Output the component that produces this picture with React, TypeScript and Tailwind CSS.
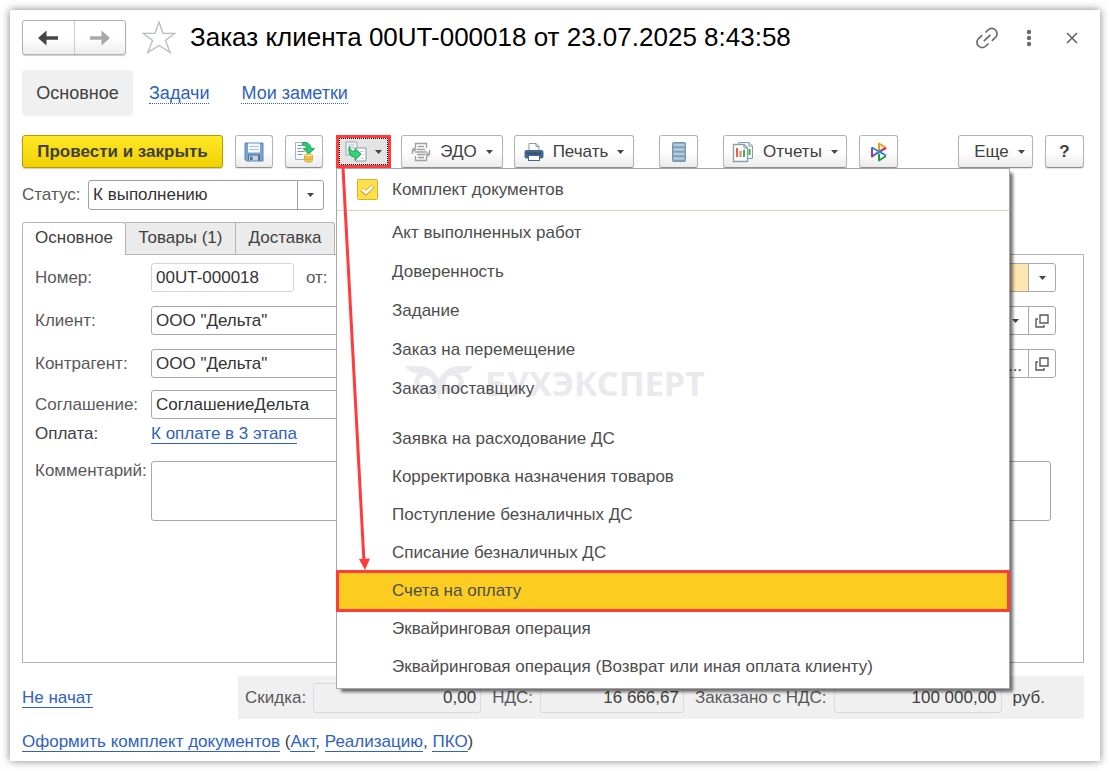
import React from 'react';

const menuTop = [
  'Акт выполненных работ',
  'Доверенность',
  'Задание',
  'Заказ на перемещение',
  'Заказ поставщику'
];

const menuBottom = [
  'Заявка на расходование ДС',
  'Корректировка назначения товаров',
  'Поступление безналичных ДС',
  'Списание безналичных ДС',
  'Счета на оплату',
  'Эквайринговая операция',
  'Эквайринговая операция (Возврат или иная оплата клиенту)'
];

const selectedItem = 'Счета на оплату';

const buttonClass =
  'flex h-[33px] shrink-0 items-center justify-center rounded-[3px] border border-[#b4b4b4] border-b-[#8f8f8f] bg-linear-to-b from-white from-50% to-[#ebebeb] text-[#404040] shadow-[0_1px_1px_rgba(0,0,0,0.12)]';

const inputClass =
  'h-[29px] min-w-0 rounded-[3px] border border-[#a8a8a8] bg-white px-1 text-[#333333] outline-none';

const linkClass = 'text-[#2f62bd] border-b border-[#2f62bd] leading-[18px]';

const Caret = () => (
  <svg width="7" height="4" viewBox="0 0 7 4" className="shrink-0" aria-hidden="true">
    <path d="M0 0h7L3.5 4z" fill="#454545" />
  </svg>
);

const ArrowIcon = ({ color, flip }: { color: string; flip?: boolean }) => (
  <svg width="20" height="16" viewBox="0 0 20 16" className={flip ? 'rotate-180' : ''} aria-hidden="true">
    <path d="M0 8L8.5 0.5V6.3H20V9.7H8.5V15.5z" fill={color} />
  </svg>
);

const StarIcon = () => (
  <svg width="34" height="33" viewBox="0 0 34 33" aria-hidden="true">
    <path
      d="M17 1L21 12.3H33L23.4 19.4L28.2 31.5L17 24.4L5.8 31.5L10.6 19.4L1 12.3H13z"
      fill="#fff"
      stroke="#b4bcc4"
      strokeWidth="1.3"
    />
  </svg>
);

const LinkIcon = () => (
  <svg width="24" height="24" viewBox="0 0 24 24" fill="none" stroke="#6a6a6a" strokeWidth="1.7" aria-hidden="true">
    <path d="M10.5 6.5L13 4A5.3 5.3 0 0 1 20.5 11.5L16.8 14.8" />
    <path d="M13.5 17.5L11 20A5.3 5.3 0 0 1 3.5 12.5L7.2 9.2" />
    <path d="M8.8 15.2L15.4 8.8" />
  </svg>
);

const SaveIcon = () => (
  <svg width="20" height="20" viewBox="0 0 20 20" aria-hidden="true">
    <path d="M1 1h18v18H2.5L1 17.5z" fill="#79a3d1" stroke="#5b82b0" />
    <rect x="4" y="1.5" width="12" height="9" fill="#f4f7fa" />
    <path d="M5.5 4.5h9M5.5 7.5h9" stroke="#a9c0d8" />
    <rect x="4" y="12.5" width="12" height="6" fill="#4f7099" />
    <rect x="5" y="13.5" width="9" height="5" fill="#c3cfdb" />
    <rect x="6" y="14.5" width="2.5" height="3.5" fill="#4f7099" />
  </svg>
);

const PostIcon = () => (
  <svg width="22" height="22" viewBox="0 0 22 22" aria-hidden="true">
    <path d="M2.5 1.5h12v17h-12z" fill="#f8fafa" stroke="#a5b4bf" />
    <path d="M4.5 4.500h5M4.5 7.5h4M4.5 10.5h7M4.5 13.500h5" stroke="#8296a6" />
    <path d="M9.500 1.500C14.500 1 18 3.500 18 7.5H21.5L15.8 13L10 7.5H13.500C13.500 5.500 12 4.300 9.500 4.300z" fill="#27cd6d" stroke="#12984b" strokeWidth="0.8" />
    <path d="M11.500 14.500v5c0 2.200 8 2.200 8 0v-5" fill="#f3cd50" stroke="#cfa133" strokeWidth="0.8" />
    <ellipse cx="15.5" cy="14.500" rx="4" ry="1.500" fill="#ffe791" stroke="#cfa133" strokeWidth="0.8" />
    <path d="M11.500 17c0 2 8 2 8 0" fill="none" stroke="#cfa133" strokeWidth="0.8" />
  </svg>
);

const CreateIcon = () => (
  <svg width="22" height="21" viewBox="0 0 22 21" aria-hidden="true">
    <path d="M1 1h11v13H1z" fill="#eef2f4" stroke="#98a8b5" />
    <path d="M3.500 4h6M3.500 6.500h6" stroke="#b6c2ca" />
    <path d="M10.500 7h10.500v13H10.500z" fill="#fff" stroke="#8798a6" />
    <path d="M15 10.500h4M17 13.500h2M15.500 17.500h3.500" stroke="#c3ccd3" />
    <path d="M4.500 5.500C4.500 9 6.500 10.500 10 10.500V7.500L16 13L10 19.200V16C5.500 16 2.500 12 4.500 5.500z" fill="#2fd673" stroke="#12984b" strokeWidth="0.9" />
  </svg>
);

const EdoIcon = () => (
  <svg width="20" height="20" viewBox="0 0 20 20" fill="none" stroke="#a0a0a0" strokeWidth="1.4" aria-hidden="true">
    <path d="M4.500 6V1.500H15.500V6M4.500 14V18.500H15.500V14" />
    <path d="M7 4.500h6M6 7.500h8M4 10h12M6 12.500h8M7 15.500h6" />
    <path d="M1.500 12V7.500H4M18.500 8V12.500H16" />
    <path d="M2.500 5V10L6 7.500zM17.500 10V15L14 12.500z" fill="#a0a0a0" stroke="none" />
  </svg>
);

const PrinterIcon = () => (
  <svg width="20" height="20" viewBox="0 0 20 20" aria-hidden="true">
    <path d="M5 9V1.500H12L15 4.500V9" fill="#fff" stroke="#8297ad" />
    <path d="M12 1.500V4.500H15" fill="none" stroke="#8297ad" />
    <rect x="0.500" y="8" width="19" height="8.500" rx="2" fill="#456890" />
    <path d="M3 11.500h14" stroke="#2b4a70" strokeWidth="1.500" />
    <rect x="4.500" y="13.500" width="11" height="5" fill="#fff" stroke="#456890" />
  </svg>
);

const ListIcon = () => (
  <svg width="14" height="20" viewBox="0 0 14 20" aria-hidden="true">
    <rect x="0.500" y="0.500" width="13" height="19" rx="1" fill="#7f9fba" stroke="#7494b0" />
    <path d="M1.500 3h11M1.500 7.500h11M1.500 12h11M1.500 16.500h11" stroke="#b4cde0" strokeWidth="2.500" />
  </svg>
);

const ReportIcon = () => (
  <svg width="22" height="22" viewBox="0 0 22 22" aria-hidden="true">
    <path d="M6.500 1.500H17L20.500 5V17.500H6.500z" fill="#f3f6f8" stroke="#8b9dab" />
    <path d="M17 1.500V5H20.500" fill="none" stroke="#8b9dab" />
    <path d="M17.500 8v6" stroke="#38b44a" strokeWidth="2" />
    <path d="M1.500 3.500H12L15.500 7V20.500H1.500z" fill="#fff" stroke="#8b9dab" strokeWidth="1.300" />
    <path d="M12 3.500V7H15.500" fill="none" stroke="#8b9dab" />
    <path d="M5 7v9" stroke="#ee5a50" strokeWidth="2" />
    <path d="M8.500 10v6" stroke="#ee7a50" strokeWidth="2" />
    <path d="M12 9v7" stroke="#3cb54c" strokeWidth="2" />
  </svg>
);

const ConnectIcon = () => (
  <svg width="18" height="20" viewBox="0 0 18 20" fill="none" strokeWidth="2" strokeLinejoin="round" aria-hidden="true">
    <path d="M9 9.500V1.500L16 6" stroke="#f59a12" />
    <path d="M16 6L9.500 9.500" stroke="#e4254b" />
    <path d="M2 5.500V14.500L8 10.500" stroke="#8a3fa0" />
    <path d="M9 12V18.500L16 14" stroke="#1f9e3b" />
    <path d="M2 5.500L16 13.500" stroke="#1e88d2" />
    <path d="M7 11.500L12 8.500" stroke="#1e88d2" />
  </svg>
);

const OpenIcon = () => (
  <svg width="14" height="14" viewBox="0 0 14 14" fill="none" stroke="#5a5a5a" strokeWidth="1.4" aria-hidden="true">
    <path d="M5 1h8v8H5z" />
    <path d="M3 5H1V13H9V11" />
  </svg>
);

const CheckIcon = () => (
  <svg width="21" height="21" viewBox="0 0 21 21" aria-hidden="true">
    <rect x="0.500" y="0.500" width="20" height="20" rx="1" fill="#ffe04a" stroke="#dcae2c" />
    <path d="M4.500 10.500L9 14L16 7" fill="none" stroke="#dba83a" strokeWidth="4.500" />
    <path d="M5 10.500L9 13.700L15.500 7.500" fill="none" stroke="#fff" strokeWidth="2.500" />
  </svg>
);

const Watermark = () => (
  <div className="pointer-events-none absolute top-[196px] left-[68px] flex items-center gap-3 text-[#e9e9ee]">
    <svg width="68" height="36" viewBox="0 0 68 36" aria-hidden="true">
      <path d="M0 1H13C22 1 29 5 34 14C39 5 46 1 55 1H68C65 6 61 8 56 8H48L37 25L34 35L31 25L20 8H12C7 8 3 6 0 1z" fill="currentColor" />
      <circle cx="21" cy="17" r="9" fill="#fff" stroke="currentColor" strokeWidth="5" />
      <circle cx="47" cy="17" r="9" fill="#fff" stroke="currentColor" strokeWidth="5" />
    </svg>
    <span className="font-['Noto_Sans',sans-serif] text-[34px] leading-9 font-bold">БУХЭКСПЕРТ</span>
  </div>
);

const CreateMenu = () => (
  <div
    role="menu"
    className="absolute top-full left-0 z-10 w-[674px] border border-[#a6a6a6] bg-white pb-[2px] text-[17px] text-[#4d4d4d] shadow-[4px_4px_3px_-1px_rgba(0,0,0,0.55)]"
  >
    <Watermark />
    <div className="relative">
      <button role="menuitem" className="flex h-[41px] w-full items-center gap-[14px] pl-5 text-left">
        <CheckIcon />
        Комплект документов
      </button>
      <hr className="mb-[2px] border-[#ddd8c0]" />
      {menuTop.map((item) => (
        <button key={item} role="menuitem" className="flex h-[39px] w-full items-center pl-[55px] text-left">
          {item}
        </button>
      ))}
      <div className="h-3" />
      {menuBottom.map((item) => (
        <button
          key={item}
          role="menuitem"
          className={
            item === selectedItem
              ? '-mx-px -my-[2px] flex h-[42px] w-[674px] items-center border-[3px] border-[#ff3b3b] bg-[#facd20] pl-[53px] text-left'
              : 'flex h-[38px] w-full items-center pl-[55px] text-left'
          }
        >
          {item}
        </button>
      ))}
    </div>
    {/* Pointer from the toolbar button to the selected item */}
    <svg width="40" height="404" viewBox="0 0 40 404" className="pointer-events-none absolute -top-px left-0" aria-hidden="true">
      <path d="M6 0L27 394" stroke="#ff3b3b" strokeWidth="3" />
      <path d="M22 391L33 390.500L28 402z" fill="#ff3b3b" />
    </svg>
  </div>
);

const Toolbar = () => (
  <div className="mt-[19px] flex items-center text-[17px]">
    <button className="h-[33px] w-[201px] shrink-0 rounded-[3px] border border-[#b39b00] bg-linear-to-b from-[#ffe924] to-[#f0d000] font-bold text-[#404040] shadow-[0_1px_1px_rgba(0,0,0,0.2)]">
      Провести и закрыть
    </button>
    <button aria-label="Записать" className={`${buttonClass} ml-3 w-[38px]`}>
      <SaveIcon />
    </button>
    <button aria-label="Провести" className={`${buttonClass} ml-3 w-[38px]`}>
      <PostIcon />
    </button>
    <div className="relative ml-[13px] shrink-0">
      <button aria-label="Создать на основании" className="block h-[33px] w-[55px] border-[3px] border-[#ff3b3b] bg-[#e4e4e4]">
        <span className="flex h-full items-center justify-center gap-2 border border-dotted border-black">
          <CreateIcon />
          <Caret />
        </span>
      </button>
      <CreateMenu />
    </div>
    <button className={`${buttonClass} ml-2.5 w-[102px] gap-[9px]`}>
      <EdoIcon />
      ЭДО
      <Caret />
    </button>
    <button className={`${buttonClass} ml-[11px] w-[120px] gap-[9px]`}>
      <PrinterIcon />
      Печать
      <Caret />
    </button>
    <button aria-label="Список" className={`${buttonClass} ml-[25px] w-[39px]`}>
      <ListIcon />
    </button>
    <button className={`${buttonClass} ml-[25px] w-[124px] gap-[9px]`}>
      <ReportIcon />
      Отчеты
      <Caret />
    </button>
    <button aria-label="Обмен" className={`${buttonClass} ml-3 w-[39px]`}>
      <ConnectIcon />
    </button>
    <button className={`${buttonClass} ml-auto w-[75px] gap-[9px] pl-2`}>
      Еще
      <Caret />
    </button>
    <button className={`${buttonClass} ml-3 w-[39px] font-bold`}>?</button>
  </div>
);

type RowProps = {
  id: string;
  label: string;
  value: string;
  side?: React.ReactNode;
};

const FormRow = ({ id, label, value, side }: RowProps) => (
  <div className="flex items-center pr-[27px]">
    <label htmlFor={id} className="w-[116px] shrink-0">{label}</label>
    <input id={id} defaultValue={value} className={`${inputClass} flex-1`} />
    <div className="ml-10 flex w-[300px]">{side}</div>
  </div>
);

const SideField = ({ label, children }: { label: string; children: React.ReactNode }) => (
  <div className="flex h-[29px] w-full rounded-[3px] border border-[#a8a8a8]">
    <input aria-label={label} className="min-w-0 flex-1 outline-none" />
    {children}
  </div>
);

const cellClass = 'flex w-[27px] shrink-0 items-center justify-center border-l border-[#a8a8a8]';

const Total = ({ id, label, value, width }: { id: string; label: string; value: string; width: string }) => (
  <>
    <label htmlFor={id} className="shrink-0 whitespace-nowrap">{label}</label>
    <input
      id={id}
      readOnly
      defaultValue={value}
      className={`mr-1 h-[30px] min-w-0 rounded-[3px] border border-[#dadada] bg-transparent pr-1 text-right text-[#404040] outline-none ${width}`}
    />
  </>
);

const App = () => {
  return (
    <div className="bg-white p-2.5 font-['Liberation_Sans',Arial,sans-serif] text-[17px] text-[#595959]">
      <div className="bg-white pt-2.5 pr-4 pb-[9px] pl-3 shadow-[0_0_8px_rgba(0,0,0,0.5)]">
        {/* Header */}
        <header className="flex h-[35px] items-center">
          <div className="flex h-[35px] w-[104px] shrink-0 rounded-[3px] border border-[#b0b0b0] bg-linear-to-b from-white from-50% to-[#ededed] shadow-[0_1px_1px_rgba(0,0,0,0.2)]">
            <button aria-label="Назад" className="flex flex-1 items-center justify-center border-r border-[#cccccc]">
              <ArrowIcon color="#454545" />
            </button>
            <button aria-label="Вперед" className="flex flex-1 items-center justify-center">
              <ArrowIcon color="#a8a8a8" flip />
            </button>
          </div>
          <button aria-label="Избранное" className="mr-3.5 ml-4 shrink-0">
            <StarIcon />
          </button>
          <h1 className="text-[26px] whitespace-nowrap text-black">
            Заказ клиента 00UT-000018 от 23.07.2025 8:43:58
          </h1>
          <div className="mr-1.5 ml-auto flex items-center">
            <button aria-label="Ссылка" className="mr-[27px]">
              <LinkIcon />
            </button>
            <button aria-label="Меню" className="mr-[34px]">
              <svg width="6" height="18" viewBox="0 0 6 18" fill="#6a6a6a" aria-hidden="true">
                <circle cx="3" cy="3" r="2.2" />
                <circle cx="3" cy="9" r="2.2" />
                <circle cx="3" cy="15" r="2.2" />
              </svg>
            </button>
            <button aria-label="Закрыть">
              <svg width="12" height="12" viewBox="0 0 12 12" stroke="#6a6a6a" strokeWidth="1.7" aria-hidden="true">
                <path d="M1 1L11 11M11 1L1 11" />
              </svg>
            </button>
          </div>
        </header>

        {/* Navigation */}
        <nav className="mt-[15px] flex h-[46px] items-center text-[18px]">
          <a href="#main" className="flex h-full w-[111px] items-center justify-center rounded-[4px] bg-[#f0f0f0] text-[#404040]">
            Основное
          </a>
          <a href="#tasks" className="ml-4 border-b border-dotted border-[#2f62bd] leading-5 text-[#2f62bd]">Задачи</a>
          <a href="#notes" className="ml-8 border-b border-dotted border-[#2f62bd] leading-5 text-[#2f62bd]">Мои заметки</a>
        </nav>

        <Toolbar />

        {/* Status */}
        <div className="mt-3 flex items-center">
          <label htmlFor="status" className="w-[66px]">Статус:</label>
          <div className="relative">
            <select id="status" className="h-[30px] w-[236px] appearance-none rounded-[3px] border border-[#a0a0a0] bg-white pl-1 text-[#333333]">
              <option>К выполнению</option>
            </select>
            <span className="pointer-events-none absolute inset-y-px right-px flex w-[26px] items-center justify-center border-l border-[#a0a0a0]">
              <Caret />
            </span>
          </div>
        </div>

        {/* Tabs */}
        <div role="tablist" className="mt-3 flex h-8 text-[#404040]">
          <button role="tab" aria-selected="true" className="relative -mb-px h-[33px] w-[104px] rounded-t-[3px] border border-b-0 border-[#b4b4b4] bg-white pb-0.5">
            Основное
          </button>
          <button role="tab" aria-selected="false" className="w-[110px] border-t border-r border-[#b4b4b4] bg-[#ebebeb] pb-0.5">
            Товары (1)
          </button>
          <button role="tab" aria-selected="false" className="w-[99px] rounded-tr-[3px] border-t border-r border-[#b4b4b4] bg-[#ebebeb] pb-0.5">
            Доставка
          </button>
        </div>

        <section className="border border-[#b4b4b4] pt-2 pb-[141px] pl-3">
          <div className="flex items-center pr-[27px]">
            <label htmlFor="number" className="w-[116px] shrink-0">Номер:</label>
            <input id="number" defaultValue="00UT-000018" className="h-[29px] w-[143px] rounded-[3px] border border-[#d4d4d4] px-1 text-[#333333]" />
            <span className="ml-3">от:</span>
            <div className="ml-auto flex h-[29px] w-[300px] rounded-[3px] border border-[#a8a8a8]">
              <input aria-label="Приоритет" className="min-w-0 flex-1 bg-[#ffe6b0] outline-none" />
              <button aria-label="Выбрать приоритет" className={cellClass}>
                <Caret />
              </button>
            </div>
          </div>
          <div className="mt-[14px]">
            <FormRow
              id="client"
              label="Клиент:"
              value={'ООО "Дельта"'}
              side={
                <SideField label="Организация">
                  <button aria-label="Выбрать организацию" className={cellClass}>
                    <Caret />
                  </button>
                  <button aria-label="Открыть организацию" className={cellClass}>
                    <OpenIcon />
                  </button>
                </SideField>
              }
            />
          </div>
          <div className="mt-[14px]">
            <FormRow
              id="partner"
              label="Контрагент:"
              value={'ООО "Дельта"'}
              side={
                <SideField label="Операция">
                  <button aria-label="Выбрать операцию" className={`${cellClass} pt-1 text-[#404040]`}>...</button>
                  <button aria-label="Открыть операцию" className={cellClass}>
                    <OpenIcon />
                  </button>
                </SideField>
              }
            />
          </div>
          <div className="mt-3">
            <FormRow id="agreement" label="Соглашение:" value="СоглашениеДельта" />
          </div>
          <div className="mt-[5px] flex items-center leading-5">
            <span className="w-[116px] text-[#404040]">Оплата:</span>
            <a href="#payment" className={linkClass}>К оплате в 3 этапа</a>
          </div>
          <div className="mt-[17px] flex items-start pr-8">
            <label htmlFor="comment" className="w-[116px] shrink-0 leading-5">Комментарий:</label>
            <textarea id="comment" className="block h-[60px] flex-1 resize-none rounded-[3px] border border-[#a8a8a8] outline-none" />
          </div>
        </section>

        {/* Totals */}
        <div className="mt-[13px] flex items-center">
          <div className="w-[216px] shrink-0">
            <a href="#state" className={linkClass}>Не начат</a>
          </div>
          <div className="flex h-[43px] flex-1 items-center gap-[7px] bg-[#f0f0f0] px-[7px]">
            <Total id="discount" label="Скидка:" value="0,00" width="w-[168px]" />
            <Total id="vat" label="НДС:" value="16 666,67" width="w-[144px]" />
            <Total id="total" label="Заказано с НДС:" value="100 000,00" width="w-[168px]" />
            <span className="text-[#404040]">руб.</span>
          </div>
        </div>

        <footer className="mt-[13px] leading-5 text-[#404040]">
          <a href="#kit" className={linkClass}>Оформить комплект документов</a> (
          <a href="#act" className={linkClass}>Акт</a>,{' '}
          <a href="#sale" className={linkClass}>Реализацию</a>,{' '}
          <a href="#pko" className={linkClass}>ПКО</a>)
        </footer>
      </div>
    </div>
  );
};

export default App;
